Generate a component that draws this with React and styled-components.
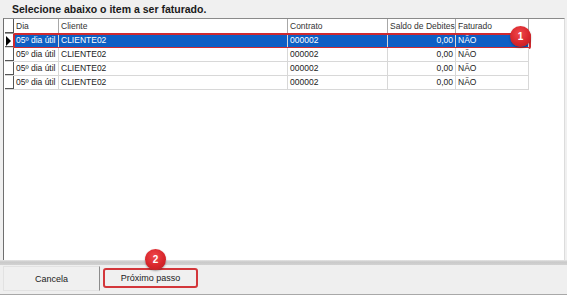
import React from "react";
import styled, { createGlobalStyle } from "styled-components";

const GlobalStyle = createGlobalStyle`
  html, body {
    margin: 0;
    padding: 0;
    background: #f0f0f0;
    font-family: "Liberation Sans", Arial, sans-serif;
  }
`;

const rows = [
  { dia: "05º dia útil", cliente: "CLIENTE02", contrato: "000002", saldo: "0,00", faturado: "NÃO" },
  { dia: "05º dia útil", cliente: "CLIENTE02", contrato: "000002", saldo: "0,00", faturado: "NÃO" },
  { dia: "05º dia útil", cliente: "CLIENTE02", contrato: "000002", saldo: "0,00", faturado: "NÃO" },
  { dia: "05º dia útil", cliente: "CLIENTE02", contrato: "000002", saldo: "0,00", faturado: "NÃO" },
];

export default function App() {
  return (
    <>
      <GlobalStyle />
      <Window>
        <Title>Selecione abaixo o item a ser faturado.</Title>
        <GridPanel>
          <Table>
            <HeaderRow>
              <Indicator />
              <HeadCell>Dia</HeadCell>
              <HeadCell>Cliente</HeadCell>
              <HeadCell>Contrato</HeadCell>
              <HeadCell>Saldo de Debites</HeadCell>
              <HeadCell>Faturado</HeadCell>
            </HeaderRow>
            {rows.map((r, i) => (
              <Row key={i} selected={i === 0}>
                <Indicator>{i === 0 && <Arrow />}</Indicator>
                <Cell>{r.dia}</Cell>
                <Cell>{r.cliente}</Cell>
                <Cell>{r.contrato}</Cell>
                <Cell align="right">{r.saldo}</Cell>
                <Cell>{r.faturado}</Cell>
                {i === 0 && <Badge style={{ left: 505, top: -8 }}>1</Badge>}
              </Row>
            ))}
          </Table>
        </GridPanel>
        <Separator />
        <ButtonBar>
          <Button wide>Cancela</Button>
          <Button highlighted>
            Próximo passo
            <Badge style={{ left: 40, top: -21 }}>2</Badge>
          </Button>
        </ButtonBar>
      </Window>
    </>
  );
}

const Window = styled.div`
  width: 567px;
  height: 295px;
  display: flex;
  flex-direction: column;
  overflow: hidden;
  background: #f0f0f0;
`;

const Title = styled.div`
  height: 18px;
  padding-left: 12px;
  font-size: 10.5px;
  font-weight: bold;
  line-height: 18px;
  color: #1a1a1a;
`;

const GridPanel = styled.div`
  flex: 1;
  margin-left: 3px;
  margin-right: 2px;
  background: #ffffff;
  border-top: 1px solid #8a8a8a;
  border-left: 1px solid #6f6f6f;
  border-right: 1px solid #dcdcdc;
  padding-left: 1px;
`;

const Table = styled.div`
  width: 524px;
  display: flex;
  flex-direction: column;
`;

const columns = "9px 45px 229px 100px 68px 73px";

const HeaderRow = styled.div`
  display: grid;
  grid-template-columns: ${columns};
  height: 14px;
  border-bottom: 1px solid #9a9a9a;
`;

const HeadCell = styled.div`
  font-size: 8.5px;
  line-height: 14px;
  padding-left: 2px;
  color: #333;
  background: #ffffff;
  border-right: 1px solid #a8a8a8;
  white-space: nowrap;
  overflow: hidden;
`;

const Row = styled.div`
  position: relative;
  display: grid;
  grid-template-columns: ${columns};
  height: 13px;
  border-bottom: 1px solid #d8d8d8;

  ${(p) =>
    p.selected &&
    `
    &::after {
      content: "";
      position: absolute;
      left: 8px;
      right: -2px;
      top: -1px;
      bottom: -2px;
      border: 2px solid #cf2a2f;
      border-radius: 2px;
      pointer-events: none;
    }
  `}

  & > div:not(:first-child) {
    background: ${(p) => (p.selected ? "#0e5fc4" : "#ffffff")};
    color: ${(p) => (p.selected ? "#ffffff" : "#222")};
  }
`;

const Indicator = styled.div`
  position: relative;
  background: #ffffff;
  border-right: 1px solid #555;
  border-bottom: 1px solid #555;
  box-sizing: border-box;
`;

const Arrow = styled.span`
  position: absolute;
  left: 1px;
  top: 2px;
  width: 0;
  height: 0;
  border-top: 5px solid transparent;
  border-bottom: 5px solid transparent;
  border-left: 5px solid #000;
`;

const Cell = styled.div`
  font-size: 8.5px;
  line-height: 13px;
  padding: 0 2px;
  text-align: ${(p) => p.align || "left"};
  border-right: 1px solid #d8d8d8;
  white-space: nowrap;
  overflow: hidden;
`;

const Badge = styled.span`
  position: absolute;
  width: 21px;
  height: 21px;
  border-radius: 50%;
  background: radial-gradient(circle at 45% 35%, #f0484c 0%, #d8262b 55%, #b51b20 100%);
  box-shadow: 0 1px 2px rgba(0, 0, 0, 0.35);
  color: #ffffff;
  font-size: 10px;
  font-weight: bold;
  line-height: 21px;
  text-align: center;
  z-index: 2;
`;

const Separator = styled.div`
  height: 5px;
  background: linear-gradient(#e6e6e6, #c9c9c9 40%, #d2d2d2);
`;

const ButtonBar = styled.div`
  flex: 0 0 28px;
  display: flex;
  gap: 3px;
  padding: 1px 3px 0 3px;
  border-bottom: 1px solid #a8a8a8;
  background: #efefef;
  align-items: flex-start;
`;

const Button = styled.div`
  position: relative;
  width: ${(p) => (p.wide ? "97px" : "95px")};
  height: ${(p) => (p.highlighted ? "20px" : "25px")};
  margin-top: ${(p) => (p.highlighted ? "2px" : "0")};
  box-sizing: border-box;
  display: flex;
  align-items: center;
  justify-content: center;
  font-size: 9px;
  color: #222;
  background: #f0f0f0;
  border: ${(p) => (p.highlighted ? "2px solid #d3373b" : "1px solid #e2e2e2")};
  border-right: ${(p) => (p.highlighted ? "2px solid #d3373b" : "1px solid #8c8c8c")};
  border-radius: ${(p) => (p.highlighted ? "3px" : "0")};
`;
